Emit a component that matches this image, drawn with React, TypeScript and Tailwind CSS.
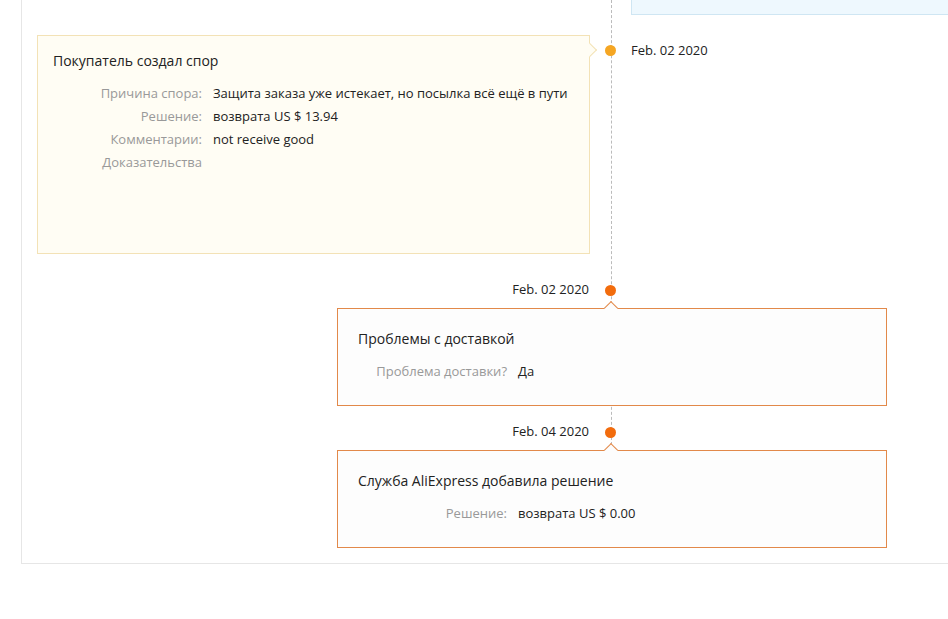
import React from "react";

type Row = { label: string; value?: string };

const font = { fontFamily: '"Open Sans", "Noto Sans", sans-serif' };

function Rows({ rows }: { rows: Row[] }) {
  return (
    <div className="mt-[11px]">
      {rows.map((r) => (
        <div key={r.label} className="flex leading-[23px] text-[13px]">
          <div className="w-[149px] shrink-0 text-right text-[#999]">{r.label}</div>
          <div className="pl-[11px] text-[#222]">{r.value}</div>
        </div>
      ))}
    </div>
  );
}

function Dot({ color }: { color: string }) {
  return (
    <div className="flex w-[41px] shrink-0 justify-center">
      <span className={`block h-[11px] w-[11px] rounded-full ${color}`} />
    </div>
  );
}

export default function App() {
  return (
    <div className="min-h-[619px] bg-white" style={font}>
      <div className="relative ml-[21px] border-b border-l border-[#e6e6e6] pb-[15px]">
        {/* dashed timeline spine */}
        <div className="absolute left-[589px] top-0 h-[450px] border-l border-dashed border-[#bbb]" />

        {/* previous entry, cut off at the top */}
        <div className="ml-[609px] h-[15px] border-b border-l border-[#cfe6f3] bg-[#eef8fe]" />

        {/* buyer opened the dispute */}
        <div className="relative mt-[20px] flex items-start pl-[15px]">
          <div className="relative h-[219px] w-[553px] border border-[#f3e2b6] bg-[#fffdf4] px-[15px] pt-[15px]">
            <span className="absolute right-[-6px] top-[9px] h-[10px] w-[10px] rotate-45 border-r border-t border-[#f3e2b6] bg-[#fffdf4]" />
            <div className="text-[14px] leading-[20px] text-[#222]">Покупатель создал спор</div>
            <Rows
              rows={[
                { label: "Причина спора:", value: "Защита заказа уже истекает, но посылка всё ещё в пути" },
                { label: "Решение:", value: "возврата US $ 13.94" },
                { label: "Комментарии:", value: "not receive good" },
                { label: "Доказательства" },
              ]}
            />
          </div>
          <div className="mt-[5px] flex h-[21px] items-center">
            <Dot color="bg-[#f5a623]" />
            <span className="pt-px text-[13px] text-[#222]">Feb. 02 2020</span>
          </div>
        </div>

        {/* delivery problem */}
        <div className="relative mt-[25px] flex h-[22px] items-center">
          <div className="w-[568px] pr-px text-right text-[13px] text-[#222]">Feb. 02 2020</div>
          <Dot color="bg-[#f26c0d]" />
        </div>
        <div className="relative ml-[315px] mt-[7px] h-[98px] w-[550px] border border-[#e2894a] bg-[#fdfdfd] px-[20px] pt-[20px]">
          <span className="absolute left-[268px] top-[-6px] h-[10px] w-[10px] rotate-45 border-l border-t border-[#e2894a] bg-[#fdfdfd]" />
          <div className="text-[14px] leading-[20px] text-[#222]">Проблемы с доставкой</div>
          <Rows rows={[{ label: "Проблема доставки?", value: "Да" }]} />
        </div>

        {/* AliExpress resolution */}
        <div className="relative mt-[15px] flex h-[22px] items-center">
          <div className="w-[568px] pr-px text-right text-[13px] text-[#222]">Feb. 04 2020</div>
          <Dot color="bg-[#f26c0d]" />
        </div>
        <div className="relative ml-[315px] mt-[7px] h-[98px] w-[550px] border border-[#e2894a] bg-[#fdfdfd] px-[20px] pt-[20px]">
          <span className="absolute left-[268px] top-[-6px] h-[10px] w-[10px] rotate-45 border-l border-t border-[#e2894a] bg-[#fdfdfd]" />
          <div className="text-[14px] leading-[20px] text-[#222]">Служба AliExpress добавила решение</div>
          <Rows rows={[{ label: "Решение:", value: "возврата US $ 0.00" }]} />
        </div>
      </div>
    </div>
  );
}
